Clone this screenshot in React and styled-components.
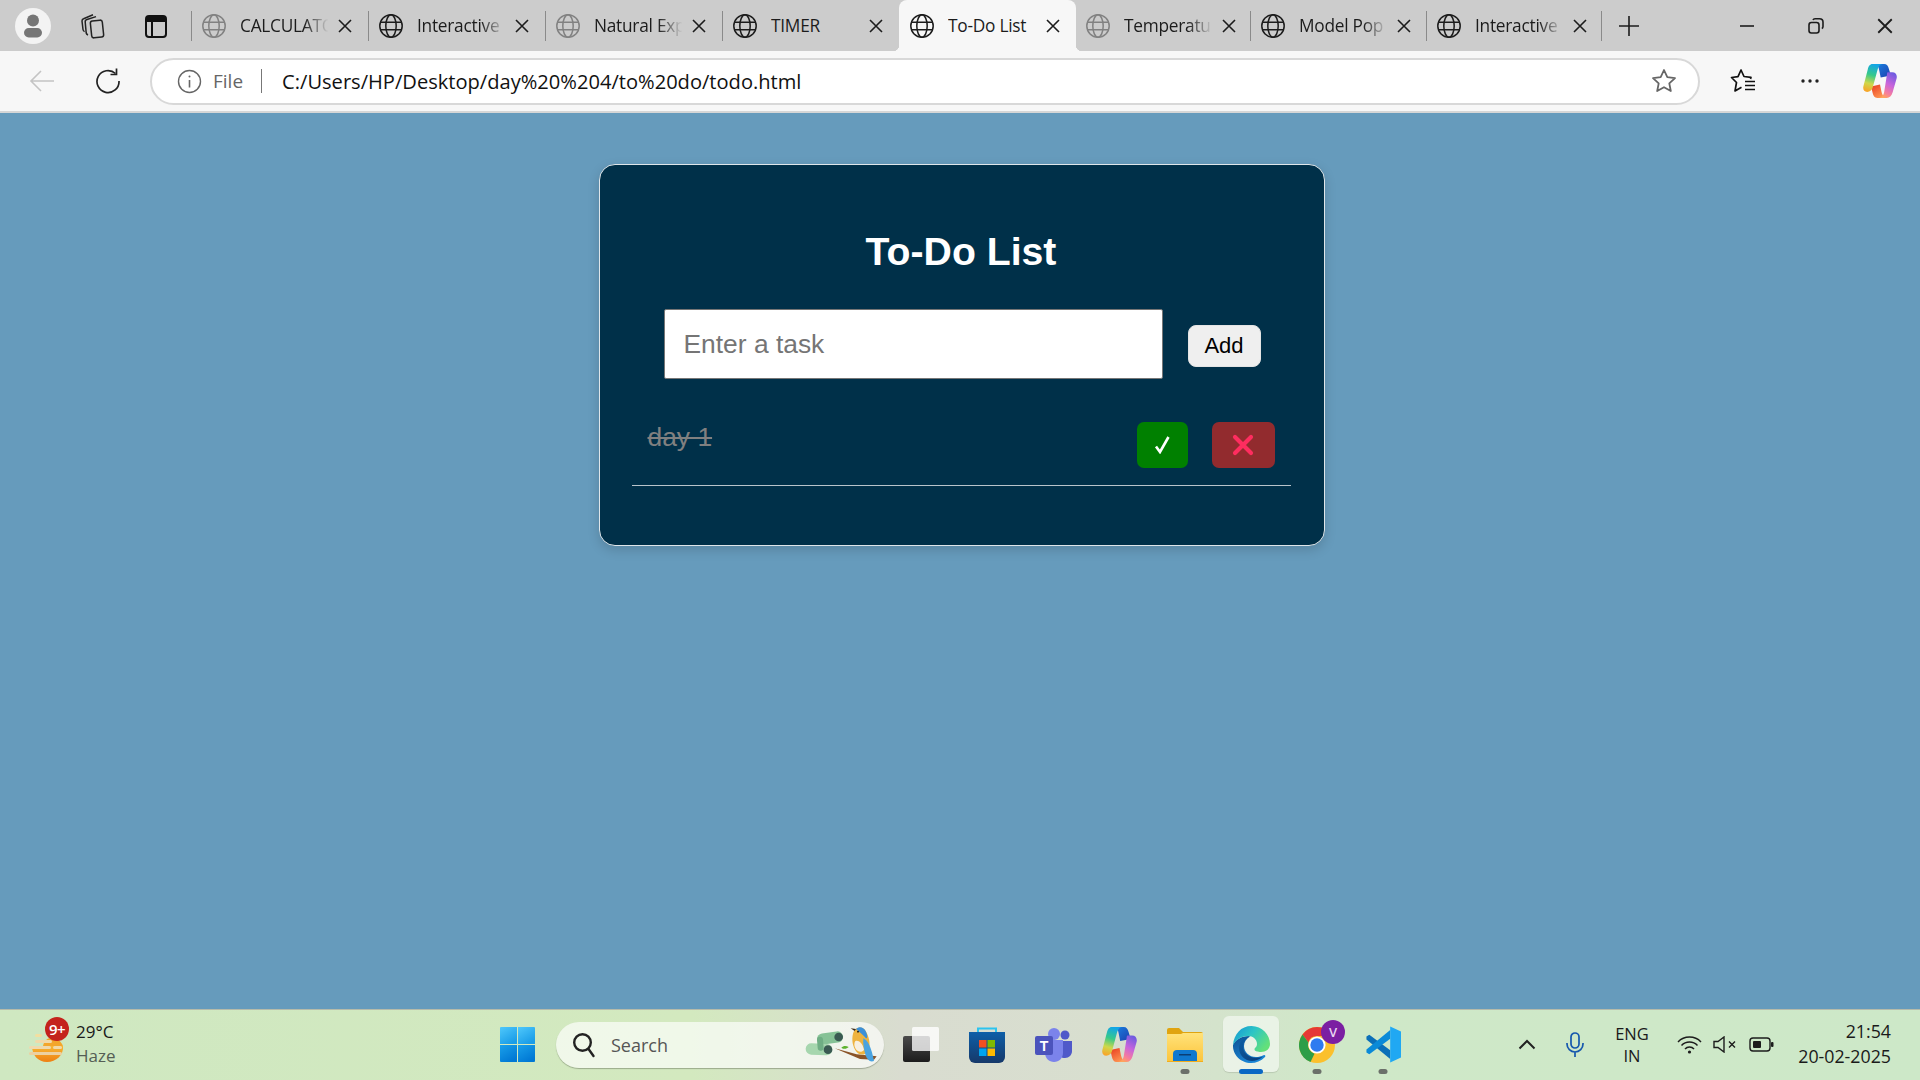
import React from "react";
import styled, { createGlobalStyle } from "styled-components";

const Global = createGlobalStyle`
  html, body { margin: 0; padding: 0; height: 100%; overflow: hidden; }
  * { box-sizing: border-box; }
  #root { height: 100%; }
`;
const UI = `"Open Sans", "Noto Sans", sans-serif`;
const ARIAL = `"Liberation Sans", Arial, sans-serif`;

const Shell = styled.div`display:flex;flex-direction:column;height:1080px;width:1920px;font-family:${UI};color:#1a1a1a;`;
const TabStrip = styled.div`display:flex;align-items:center;height:51px;background:#ccc;flex:none;`;
const StripButton = styled.div`display:flex;align-items:center;justify-content:center;flex:none;height:51px;width:${p => p.$w}px;`;
const Avatar = styled.div`width:36px;height:36px;border-radius:50%;background:#f3f3f3;display:flex;align-items:center;justify-content:center;`;
const Sep = styled.div`width:1px;height:30px;background:#8a8a8a;flex:none;`;
const Tab = styled.div`
  position:relative;display:flex;align-items:center;height:51px;flex:none;width:${p => p.$w}px;padding-left:${p => p.$active ? 10 : 9}px;
  background:${p => p.$active ? "#f7f7f7" : "transparent"};border-radius:${p => p.$active ? "8px 8px 0 0" : "0"};
`;
const Flare = styled.span`
  position:absolute;bottom:0;width:6px;height:6px;
  ${p => p.$side === "l" ? "left:-6px;background:radial-gradient(circle at 0 0,transparent 6px,#f7f7f7 6.5px);" : "right:-6px;background:radial-gradient(circle at 100% 0,transparent 6px,#f7f7f7 6.5px);"}
`;
const TabIcon = styled.span`display:flex;flex:none;width:26px;height:26px;margin-right:13px;opacity:${p => p.$dim ? 0.42 : 1};`;
const TabTitle = styled.span`
  flex:none;width:94px;overflow:hidden;white-space:nowrap;font-size:17.3px;line-height:24px;color:#1c1c1c;letter-spacing:-.25px;
  ${p => p.$fade ? "-webkit-mask-image:linear-gradient(to right,#000 68%,transparent 94%);mask-image:linear-gradient(to right,#000 68%,transparent 94%);" : ""}
`;
const TabClose = styled.span`display:flex;flex:none;margin-left:3px;width:16px;height:16px;`;
const WindowControls = styled.div`display:flex;margin-left:auto;padding-right:1px;`;

const Toolbar = styled.div`display:flex;align-items:center;height:62px;padding:0 2px 0 9px;background:#f7f7f7;border-bottom:2px solid #d6d6d6;flex:none;`;
const NavButton = styled.div`display:flex;align-items:center;justify-content:center;flex:none;width:66px;height:46px;margin-left:${p => p.$ml || 0}px;`;
const Omnibox = styled.div`display:flex;align-items:center;flex:none;width:1550px;height:47px;margin:0 10px 0 9px;padding:0 21px 0 25px;background:#fff;border:2px solid #d8d8d8;border-radius:24px;`;
const FileLabel = styled.span`font-size:19px;color:#666;margin-left:11px;`;
const OmniSep = styled.span`width:1px;height:24px;background:#777;margin:0 20px 0 18px;`;
const Url = styled.span`font-size:20.1px;color:#111;flex:1;white-space:nowrap;`;

const Page = styled.main`flex:1;background:#669bbc;display:flex;flex-direction:column;align-items:center;padding:51px 0 0 3px;min-height:0;`;
const Card = styled.section`
  width:726px;height:382px;background:#003049;border:1px solid #dfe6ea;border-radius:16px;padding:65px 33px 0 32px;
  box-shadow:0 4px 12px rgba(0,0,0,.15);font-family:${ARIAL};display:flex;flex-direction:column;
`;
const Title = styled.h1`margin:0;font-size:39.2px;line-height:44px;font-weight:700;color:#fff;text-align:center;`;
const InputRow = styled.div`display:flex;align-items:center;gap:25px;margin:35px 0 0 32px;`;
const TaskInput = styled.input`
  width:499px;height:70px;padding:0 19px;font:26.4px ${ARIAL};background:#fff;border:1px solid #767676;border-radius:2px;outline:none;
  &::placeholder{color:#757575;opacity:1;}
`;
const AddButton = styled.button`width:73px;height:42px;margin-top:3px;font:22px ${ARIAL};color:#000;background:#efefef;border:1px solid #e4e4e4;border-radius:8px;padding:0;`;
const TaskList = styled.ul`list-style:none;margin:43px 0 0;padding:0;`;
const TaskRow = styled.li`display:flex;align-items:flex-start;padding:0 16px 17px;border-bottom:1px solid #b9c4cb;`;
const TaskText = styled.span`flex:1;font-size:26.4px;line-height:30px;color:#808080;text-decoration:line-through;`;
const RowButton = styled.button`
  display:flex;align-items:center;justify-content:center;width:${p => p.$w}px;height:46px;padding:0;margin-left:${p => p.$ml || 0}px;
  border:none;border-radius:7px;background:${p => p.$bg};
`;

const Taskbar = styled.footer`
  display:flex;align-items:center;height:71px;flex:none;border-top:1px solid #b6bbaa;padding-bottom:1px;
  background:linear-gradient(90deg,#cfe8c1 0%,#d3e9bf 36%,#d9dcd0 47%,#d8dfcf 58%,#cfe8c8 70%,#cde8c8 100%);
`;
const Weather = styled.div`position:relative;display:flex;align-items:center;flex:none;width:484px;height:100%;padding-left:29px;`;
const WeatherIcon = styled.span`display:flex;width:35px;height:30px;margin:6px 12px 0 0;`;
const Badge = styled.span`
  position:absolute;left:45px;top:7px;width:24px;height:24px;border-radius:50%;background:#c4231c;color:#fff;font-size:15px;font-weight:600;
  display:flex;align-items:center;justify-content:center;letter-spacing:-.5px;
`;
const WeatherText = styled.div`display:flex;flex-direction:column;font-size:17px;line-height:24px;margin-top:-2px;`;
const Muted = styled.span`color:#555e55;`;
const Slot = styled.div`
  position:relative;display:flex;align-items:center;justify-content:center;flex:none;width:${p => p.$w || 66}px;height:100%;margin-left:${p => p.$ml || 0}px;
`;
const ActiveTile = styled.span`position:absolute;left:5px;top:6px;width:56px;height:56px;border-radius:6px;background:rgba(255,255,255,.52);box-shadow:0 1px 1px rgba(0,0,0,.12);`;
const Dot = styled.span`position:absolute;left:50%;bottom:5px;transform:translateX(-50%);height:5px;border-radius:3px;width:${p => p.$active ? 24 : 9}px;background:${p => p.$active ? "#0a68c4" : "#6b706a"};`;
const IconWrap = styled.span`position:relative;display:flex;`;
const AvatarBadge = styled.span`position:absolute;right:-10px;top:-7px;width:24px;height:24px;border-radius:50%;background:#7b1fa2;color:#e9d6f2;font-size:13px;font-weight:600;display:flex;align-items:center;justify-content:center;`;
const SearchPill = styled.div`
  display:flex;align-items:center;flex:none;width:328px;height:46px;margin-left:6px;padding:0 4px 0 16px;border-radius:23px;
  background:rgba(255,255,255,.66);box-shadow:0 1px 1px rgba(70,80,60,.4);position:relative;
`;
const SearchLabel = styled.span`font-size:18px;color:#555;margin-left:15px;flex:1;`;
const Tray = styled.div`display:flex;align-items:center;height:100%;margin-left:auto;padding-right:29px;`;
const Lang = styled.div`display:flex;flex-direction:column;align-items:center;font-size:16.5px;line-height:22px;margin-right:6px;width:66px;flex:none;`;
const Clock = styled.div`display:flex;flex-direction:column;align-items:flex-end;width:112px;font-size:17.8px;line-height:25px;margin-top:-1px;flex:none;`;

const Globe = ({ s = 26 }) => (
  <svg width={s} height={s} viewBox="0 0 26 26" fill="none" stroke="#1c1c1c" strokeWidth="1.5">
    <circle cx="13" cy="13" r="11.2" /><ellipse cx="13" cy="13" rx="5.2" ry="11.2" />
    <path d="M2.6 9.2h20.8M2.6 16.8h20.8" />
  </svg>
);
const Close = ({ s = 16, w = 1.6 }) => (
  <svg width={s} height={s} viewBox="0 0 16 16" stroke="#1c1c1c" strokeWidth={w}><path d="M2 2l12 12M14 2L2 14" /></svg>
);
const Profile = () => (
  <svg width="18" height="24" viewBox="0 0 18 24"><circle cx="9" cy="6.500" r="6" fill="#767676"/><rect x="0" y="14" width="18" height="9.500" rx="4.700" fill="#767676"/></svg>
);
const Collections = () => (
  <svg width="26" height="26" viewBox="0 0 26 26" fill="none" stroke="#222" strokeWidth="1.5" strokeLinejoin="round">
    <rect x="11" y="7.5" width="12" height="17" rx="2.2" transform="rotate(-6 17 16)"/>
    <path d="M8 22c-1-.4-1.6-1-1.8-2L5.2 9c-.1-1.2.6-2.2 1.8-2.5L16 3.6M4.6 18.6c-.9-.4-1.5-1.2-1.6-2.1L2 8c0-1 .6-2 1.6-2.3L13 1.8"/>
  </svg>
);
const TabActions = () => (
  <svg width="26" height="26" viewBox="0 0 26 26" fill="none" stroke="#111" strokeWidth="2"><rect x="3" y="3" width="20" height="21" rx="3"/><path d="M3 6.500h20" strokeWidth="5"/><path d="M9 8v15"/></svg>
);
const Plus = () => <svg width="24" height="24" viewBox="0 0 24 24" stroke="#1c1c1c" strokeWidth="1.6"><path d="M12 2v20M2 12h20"/></svg>;
const Minimize = () => <svg width="16" height="16" viewBox="0 0 16 16" stroke="#1c1c1c" strokeWidth="1.6"><path d="M1 8h14"/></svg>;
const Restore = () => (
  <svg width="18" height="18" viewBox="0 0 18 18" fill="none" stroke="#1c1c1c" strokeWidth="1.6"><rect x="2" y="5.5" width="10" height="10.5" rx="2.4"/><path d="M6 3c.4-1 1-1.3 2-1.3h4.5C14.600 1.700 16 3 16 5v4.500c0 1-.4 1.700-1.200 2"/></svg>
);
const Back = () => <svg width="26" height="24" viewBox="0 0 26 24" fill="none" stroke="#c4c4c4" strokeWidth="1.6"><path d="M25 12H2M12 2L2 12l10 10"/></svg>;
const Refresh = () => (
  <svg width="26" height="26" viewBox="0 0 26 26" fill="none" stroke="#222" strokeWidth="1.7"><path d="M20.500 5.500A11 11 0 1 0 24 13"/><path d="M21.500 0.500v6h-6"/></svg>
);
const Info = () => (
  <svg width="25" height="25" viewBox="0 0 25 25" fill="none" stroke="#666" strokeWidth="1.4"><circle cx="12.500" cy="12.500" r="11"/><path d="M12.500 11v7.500" strokeWidth="1.600"/><circle cx="12.500" cy="7.500" r="1" fill="#666" stroke="none"/></svg>
);
const Star = () => (
  <svg width="26" height="26" viewBox="0 0 26 26" fill="none" stroke="#666" strokeWidth="1.8" strokeLinejoin="round"><path d="M13 2l3.300 7.200 7.700.9-5.700 5.300 1.500 7.600-6.800-3.800L6.200 23l1.500-7.600L2 10.100l7.700-.9z"/></svg>
);
const Favorites = () => (
  <svg width="26" height="26" viewBox="0 0 26 26" fill="none" stroke="#111" strokeWidth="1.7" strokeLinejoin="round">
    <path d="M20.500 11L21 9.300 14 8.500 11 2 8 8.600 1.500 9.500l5 5L5 23l6.500-3.800"/>
    <path d="M15 13.500h10M15 17.500h10M15 21.500h10" strokeWidth="1.500"/>
  </svg>
);
const More = () => <svg width="20" height="6" viewBox="0 0 20 6" fill="#222"><circle cx="3" cy="3" r="1.700"/><circle cx="10" cy="3" r="1.700"/><circle cx="17" cy="3" r="1.700"/></svg>;

const Copilot = ({ s = 34, id = "a" }) => (
  <svg width={s} height={s} viewBox="0 0 100 100">
    <defs>
      <linearGradient id={id + "1"} x1=".55" y1="0" x2=".35" y2="1"><stop offset="0" stopColor="#12a5e8"/><stop offset=".4" stopColor="#36c98a"/><stop offset=".72" stopColor="#cfd84a"/><stop offset="1" stopColor="#f7a62a"/></linearGradient>
      <linearGradient id={id + "2"} x1=".7" y1="0" x2=".3" y2="1"><stop offset="0" stopColor="#6f5be0"/><stop offset=".45" stopColor="#c864dc"/><stop offset=".8" stopColor="#f77e9a"/><stop offset="1" stopColor="#ffa45c"/></linearGradient>
      <linearGradient id={id + "3"} x1="0" y1="0" x2="1" y2="1"><stop offset="0" stopColor="#1b7fe0"/><stop offset="1" stopColor="#1a3fae"/></linearGradient>
      <linearGradient id={id + "4"} x1="0" y1="0" x2=".7" y2="1"><stop offset="0" stopColor="#e8391f"/><stop offset="1" stopColor="#ff9a55"/></linearGradient>
    </defs>
    <path d="M38 0H62C70 0 74 6 76 14L82 34 52 40 48 20C46 10 44 3 38 0Z" fill={`url(#${id}3)`}/>
    <path d="M24 66L50 60 54 80C56 90 60 96 67 100H42C34 100 30 94 28 84Z" fill={`url(#${id}4)`}/>
    <path d="M28 0H56C48 2 45 9 43 16L29 68C27 76 21 82 12 82 4 82-1 75 1 66L14 16C16 7 20 0 28 0Z" fill={`url(#${id}1)`}/>
    <path d="M72 24H86C96 24 101 32 99 42L87 84C84 94 78 100 70 100H48C56 98 60 92 62 84L70 34C71 30 70 26 72 24Z" fill={`url(#${id}2)`}/>
  </svg>
);
const Win = () => (
  <svg width="35" height="35" viewBox="0 0 35 35">
    <defs>
      <linearGradient id="w1" x1="0" y1="0" x2=".6" y2="1"><stop offset="0" stopColor="#4fc8fb"/><stop offset="1" stopColor="#1a9de8"/></linearGradient>
      <linearGradient id="w2" x1="0" y1="0" x2=".6" y2="1"><stop offset="0" stopColor="#1aa0ea"/><stop offset="1" stopColor="#0078d4"/></linearGradient>
    </defs>
    <path d="M1 0h16v17H0V1a1 1 0 0 1 1-1z" fill="url(#w1)"/><path d="M18 0h16a1 1 0 0 1 1 1v16H18z" fill="url(#w1)"/>
    <path d="M0 18h17v17H1a1 1 0 0 1-1-1z" fill="url(#w2)"/><path d="M18 18h17v16a1 1 0 0 1-1 1H18z" fill="url(#w2)"/>
  </svg>
);
const SearchIcon = () => <svg width="24" height="26" viewBox="0 0 24 26" fill="none" stroke="#222" strokeWidth="2.400"><circle cx="10.500" cy="10.500" r="8.300"/><path d="M16.500 17l5 7" strokeLinecap="round"/></svg>;
const BirdArt = () => (
  <svg width="75" height="38" viewBox="15 17 225 114">
    <g fill="none" strokeLinecap="round">
      <path d="M68 56L112 50" stroke="#86c296" strokeWidth="34"/>
      <path d="M34 86L80 88" stroke="#a6d6ae" strokeWidth="34"/>
      <path d="M60 58L62 82" stroke="#6fae84" strokeWidth="18"/>
    </g>
    <circle cx="116" cy="50" r="13" fill="#3a5a52"/><circle cx="84" cy="88" r="13" fill="#3a5a52"/>
    <path d="M104 84L170 102 230 108 222 118 180 116z" fill="#8a5428"/>
    <path d="M124 82c6-6 14-6 22-2-6 6-14 8-22 2z" fill="#5eb32f"/>
    <path d="M162 32c10-14 28-14 36 2 12 20 14 44 6 60-10 12-30 12-38-4-10-18-12-40-4-58z" fill="#eeb33f"/>
    <path d="M166 62c8-4 22 4 26 26-6 10-20 8-26-4-4-8-4-16 0-22z" fill="#f7efe0"/>
    <path d="M168 26c10-10 24-6 30 8 6 14 4 20 0 20-8-10-18-18-30-28z" fill="#3c90d8"/>
    <path d="M190 54c14 6 24 28 32 68-12 4-20-2-26-20-4-14-8-32-6-48z" fill="#4aa3e0"/>
    <path d="M164 32l-12-8 16 2z" fill="#3b2a1a"/><circle cx="174" cy="34" r="2.800" fill="#111"/>
  </svg>
);
const WeatherSvg = () => (
  <svg width="35" height="30" viewBox="0 0 35 30">
    <defs><linearGradient id="sun" x1="0" y1="0" x2="0" y2="1"><stop offset="0" stopColor="#f7b733"/><stop offset="1" stopColor="#ee7f12"/></linearGradient></defs>
    <path d="M3 13h31c1 9-7 16-16 16S3 22 3 13z" fill="url(#sun)"/>
    <path d="M22 5c6 0 10 3 12 8H14c1-5 4-8 8-8z" fill="#f3a62b"/>
    <rect x="6" y="1" width="7" height="3" rx="1.500" fill="#f3dfa0"/><rect x="6" y="7" width="17" height="3" rx="1.500" fill="#f1d9a8"/>
    <rect x="0" y="13" width="22" height="3" rx="1.500" fill="#efd9ad"/><rect x="24" y="13" width="9" height="3" rx="1.500" fill="#f1d9a8"/>
    <rect x="0" y="19" width="33" height="3" rx="1.500" fill="#ecd0a0"/>
  </svg>
);
const TaskView = () => (
  <svg width="36" height="35" viewBox="0 0 36 35">
    <defs><linearGradient id="tv" x1="0" y1="0" x2="0" y2="1"><stop offset="0" stopColor="#4a4a4a"/><stop offset="1" stopColor="#1c1c1c"/></linearGradient></defs>
    <rect x="0" y="9" width="27" height="26" rx="2" fill="url(#tv)"/>
    <rect x="9" y="0" width="27" height="24" rx="1.500" fill="#fff" fillOpacity=".78"/>
  </svg>
);
const Store = () => (
  <svg width="36" height="36" viewBox="0 0 36 36">
    <defs><linearGradient id="st" x1="0" y1="0" x2="0" y2="1"><stop offset="0" stopColor="#0e5fa8"/><stop offset="1" stopColor="#16396a"/></linearGradient></defs>
    <path d="M9 5V1.500h18V5" fill="none" stroke="#2cc4ef" strokeWidth="2"/>
    <path d="M0 5h36v25a6 6 0 0 1-6 6H6a6 6 0 0 1-6-6z" fill="url(#st)"/>
    <rect x="10" y="13" width="7.500" height="7.500" fill="#f25022"/><rect x="18.500" y="13" width="7.500" height="7.500" fill="#7fba00"/>
    <rect x="10" y="21.500" width="7.500" height="7.500" fill="#00a4ef"/><rect x="18.500" y="21.500" width="7.500" height="7.500" fill="#ffb900"/>
  </svg>
);
const Teams = () => (
  <svg width="37" height="34" viewBox="0 0 37 34">
    <circle cx="30" cy="7" r="4.500" fill="#5059c9"/>
    <path d="M24 13h13v10c0 4-3 7-7 7s-6-2-6-5z" fill="#5059c9"/>
    <circle cx="19" cy="6" r="6" fill="#7b83eb"/>
    <path d="M10 12h18v13c0 5-4 9-9 9s-9-4-9-9z" fill="#7b83eb"/>
    <rect x="0" y="8" width="18" height="19" rx="2" fill="#4b53bc"/>
    <text x="9" y="23" textAnchor="middle" fontFamily="Liberation Sans" fontWeight="700" fontSize="14" fill="#fff">T</text>
  </svg>
);
const Folder = () => (
  <svg width="36" height="34" viewBox="0 0 36 34">
    <defs><linearGradient id="fo" x1="0" y1="0" x2="0" y2="1"><stop offset="0" stopColor="#ffe27a"/><stop offset="1" stopColor="#fcc43a"/></linearGradient></defs>
    <path d="M0 2a2 2 0 0 1 2-2h10l4 4h18a2 2 0 0 1 2 2v4H0z" fill="#e0a410"/>
    <path d="M0 6h14l2-1h20v29H0z" fill="url(#fo)"/>
    <path d="M6 34v-8a4 4 0 0 1 4-4h16a4 4 0 0 1 4 4v8z" fill="#0f78cf"/>
    <rect x="12" y="26" width="12" height="1.500" fill="#0b3e75"/>
    <rect x="0" y="33" width="36" height="1" fill="#f2ae1c"/>
  </svg>
);
const Edge = () => (
  <svg width="38" height="37" viewBox="0 0 38 37">
    <defs>
      <linearGradient id="e1" x1="0" y1="0" x2="1" y2=".6"><stop offset="0" stopColor="#1392d6"/><stop offset=".5" stopColor="#2cc5c5"/><stop offset="1" stopColor="#63e07a"/></linearGradient>
      <linearGradient id="e2" x1="0" y1="0" x2=".5" y2="1"><stop offset="0" stopColor="#0c4f92"/><stop offset="1" stopColor="#1a86d6"/></linearGradient>
      <linearGradient id="e3" x1="0" y1="0" x2="1" y2="1"><stop offset="0" stopColor="#0b5fa5"/><stop offset="1" stopColor="#0a3b78"/></linearGradient>
    </defs>
    <path d="M17 10C9 10 3 14 1 19c-.5 10 8 18 18 18 5 0 10-2 14-6 1-1 0-2.500-1.500-1.800C29 30.300 27 31 24 31c-7 0-12-5-12-11 0-4 2-7 6-9.500z" fill="url(#e2)"/>
    <path d="M16 11c-5 1-9 5-9 11 0 7 6 13 13 13 3 0 7-1 11-4.500-2 .8-4.500 1.200-7 1.200-8 0-13-5-13-11.700 0-3.500 2-7 5-9z" fill="url(#e3)"/>
    <path d="M1 19C2 8 9 0 19.500 0 30 0 38 8.500 38 18c0 5-4 8-9 8-3.500 0-6.500-1-6.500-2.800 0-1.200 2.500-2 2.500-5.200 0-4.500-4-8-9-8-7 0-12 4-15 9z" fill="url(#e1)"/>
  </svg>
);
const Chrome = () => (
  <svg width="36" height="36" viewBox="0 0 36 36">
    <circle cx="18" cy="18" r="18" fill="#fbc02d"/>
    <path d="M18 0a18 18 0 0 1 15.600 9H18a9 9 0 0 0-8.600 6.400L3.500 7.500A18 18 0 0 1 18 0z" fill="#e53935"/>
    <path d="M3.500 7.500l6 8a9 9 0 0 0 6 11.200L11.500 35A18 18 0 0 1 3.500 7.500z" fill="#2e9e48"/>
    <circle cx="18" cy="18" r="8.600" fill="#fff"/><circle cx="18" cy="18" r="6.700" fill="#2f7bf0"/>
  </svg>
);
const VSCode = () => (
  <svg width="36" height="37" viewBox="0 0 100 100">
    <path d="M4 32l8-5 58 43v24L4 40z" fill="#0b6fb8" transform="translate(0 -4)"/>
    <path d="M4 68l8 5 58-43V6L4 60z" fill="#0a8ad8" transform="translate(0 4)"/>
    <path d="M70 0l30 14v72l-30 14z" fill="#20a8f3"/>
  </svg>
);
const Chevron = () => <svg width="18" height="11" viewBox="0 0 18 11" fill="none" stroke="#222" strokeWidth="2"><path d="M1.500 9.500L9 2l7.500 7.500"/></svg>;
const Mic = () => <svg width="18" height="26" viewBox="0 0 18 26" fill="none" stroke="#1557ad" strokeWidth="1.700"><rect x="5" y="1" width="8" height="15" rx="4"/><path d="M1 11v1a8 8 0 0 0 16 0v-1M9 20v5"/></svg>;
const Wifi = () => <svg width="25" height="18" viewBox="0 0 25 18" fill="none" stroke="#1c1c1c" strokeWidth="1.500"><path d="M1 6a16 16 0 0 1 23 0M4.500 9.500a11 11 0 0 1 16 0M8 13a6 6 0 0 1 9 0"/><circle cx="12.500" cy="16" r="1.600" fill="#1c1c1c" stroke="none"/></svg>;
const Volume = () => <svg width="24" height="17" viewBox="0 0 24 17" fill="none" stroke="#1c1c1c" strokeWidth="1.400"><path d="M1 5.500h4L11 1v15l-6-4.500H1z"/><path d="M16 5.500l6 6M22 5.500l-6 6"/></svg>;
const Battery = () => <svg width="25" height="15" viewBox="0 0 25 15"><rect x="1" y="1" width="20" height="13" rx="3" fill="none" stroke="#1c1c1c" strokeWidth="1.400"/><rect x="4" y="4" width="8" height="7" rx="1" fill="#1c1c1c"/><rect x="22" y="5" width="2.500" height="5" rx="1" fill="#1c1c1c"/></svg>;

const tabs = [
  { t: "CALCULATO", w: 176, dim: true, fade: true },
  { t: "Interactive", w: 176, fade: true },
  { t: "Natural Exp", w: 176, dim: true, fade: true },
  { t: "TIMER", w: 176 },
  { t: "To-Do List", w: 177, active: true },
  { t: "Temperatu", w: 174, dim: true, fade: true, noSep: true },
  { t: "Model Pop", w: 175, fade: true },
  { t: "Interactive", w: 174, fade: true },
];

export default function App() {
  return (
    <Shell>
      <Global />
      <TabStrip>
        <StripButton $w={66}><Avatar><Profile /></Avatar></StripButton>
        <StripButton $w={54}><Collections /></StripButton>
        <StripButton $w={71}><TabActions /></StripButton>
        {tabs.map((tab, i) => (
          <React.Fragment key={i}>
            {!tab.active && !tab.noSep && <Sep />}
            <Tab $w={tab.w} $active={tab.active}>
              {tab.active && <Flare $side="l" />}
              {tab.active && <Flare $side="r" />}
              <TabIcon $dim={tab.dim}><Globe /></TabIcon>
              <TabTitle $fade={tab.fade}>{tab.t}</TabTitle>
              <TabClose><Close /></TabClose>
            </Tab>
          </React.Fragment>
        ))}
        <Sep />
        <StripButton $w={54}><Plus /></StripButton>
        <WindowControls>
          <StripButton $w={69}><Minimize /></StripButton>
          <StripButton $w={69}><Restore /></StripButton>
          <StripButton $w={69}><Close s={18} /></StripButton>
        </WindowControls>
      </TabStrip>
      <Toolbar>
        <NavButton><Back /></NavButton>
        <NavButton><Refresh /></NavButton>
        <Omnibox>
          <Info />
          <FileLabel>File</FileLabel>
          <OmniSep />
          <Url>C:/Users/HP/Desktop/day%20%204/to%20do/todo.html</Url>
          <Star />
        </Omnibox>
        <NavButton><Favorites /></NavButton>
        <NavButton $ml={1}><More /></NavButton>
        <NavButton $ml={4}><Copilot id="b" /></NavButton>
      </Toolbar>
      <Page>
        <Card>
          <Title>To-Do List</Title>
          <InputRow>
            <TaskInput placeholder="Enter a task" />
            <AddButton>Add</AddButton>
          </InputRow>
          <TaskList>
            <TaskRow>
              <TaskText>day 1</TaskText>
              <RowButton $w={51} $bg="#008000" aria-label="Complete">
                <svg width="17" height="18" viewBox="0 0 17 18" fill="none" stroke="#fff" strokeWidth="2.600"><path d="M2 10.500L6 16 14.500 1"/></svg>
              </RowButton>
              <RowButton $w={63} $ml={24} $bg="#922b2e" aria-label="Delete">
                <svg width="24" height="22" viewBox="0 0 24 22" fill="none" stroke="#ff2d5f" strokeWidth="4.200" strokeLinecap="round"><path d="M4 3l16 16M20 3L4 19"/></svg>
              </RowButton>
            </TaskRow>
          </TaskList>
        </Card>
      </Page>
      <Taskbar>
        <Weather>
          <WeatherIcon><WeatherSvg /></WeatherIcon>
          <Badge>9+</Badge>
          <WeatherText><span>29°C</span><Muted>Haze</Muted></WeatherText>
        </Weather>
        <Slot><Win /></Slot>
        <SearchPill>
          <SearchIcon />
          <SearchLabel>Search</SearchLabel>
          <BirdArt />
        </SearchPill>
        <Slot $ml={4}><TaskView /></Slot>
        <Slot><Store /></Slot>
        <Slot><Teams /></Slot>
        <Slot><Copilot id="c" s={35} /></Slot>
        <Slot><Folder /><Dot /></Slot>
        <Slot><ActiveTile /><IconWrap><Edge /></IconWrap><Dot $active /></Slot>
        <Slot><IconWrap><Chrome /><AvatarBadge>V</AvatarBadge></IconWrap><Dot /></Slot>
        <Slot><VSCode /><Dot /></Slot>
        <Tray>
          <Slot $w={48}><Chevron /></Slot>
          <Slot $w={48}><Mic /></Slot>
          <Lang><span>ENG</span><span>IN</span></Lang>
          <Slot $w={36}><Wifi /></Slot>
          <Slot $w={36}><Volume /></Slot>
          <Slot $w={36}><Battery /></Slot>
          <Clock><span>21:54</span><span>20-02-2025</span></Clock>
        </Tray>
      </Taskbar>
    </Shell>
  );
}
